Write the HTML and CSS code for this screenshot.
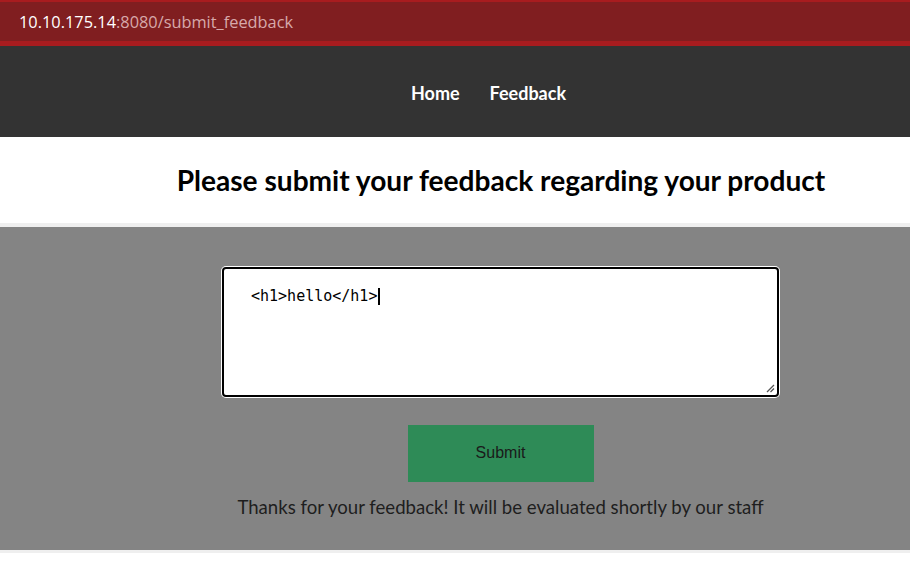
FILE: index.html
```html
<!DOCTYPE html>
<html>
<head>
<meta charset="utf-8">
<link rel="stylesheet" href="styles.css">
</head>
<body>
<div class="urlbar"><span class="host">10.10.175.14</span><span class="path">:8080/submit_feedback</span></div>
<nav class="nav">
  <a class="nav-link" href="#">Home</a>
  <a class="nav-link" href="#">Feedback</a>
</nav>
<header class="title-wrap">
  <h1 class="title">Please submit your feedback regarding your product</h1>
</header>
<main class="panel">
  <form class="form">
    <div class="textarea-box">
      <div class="textarea-text">&lt;h1&gt;hello&lt;/h1&gt;<span class="caret"></span></div>
      <svg class="grip" width="11" height="11" viewBox="0 0 11 11"><path d="M10 3 L3 10 M10 6.5 L6.5 10" stroke="#555" stroke-width="1.3" fill="none"/></svg>
    </div>
    <button class="submit" type="button">Submit</button>
    <p class="thanks">Thanks for your feedback! It will be evaluated shortly by our staff</p>
  </form>
</main>
</body>
</html>
```

FILE: styles.css
```css
html, body {
  margin: 0;
  padding: 0;
  background: #ffffff;
}
.urlbar {
  height: 39px;
  background: #801e20;
  border-top: 2px solid #a81c1f;
  border-bottom: 5px solid #a81c1f;
  box-sizing: content-box;
  padding-left: 19px;
  display: flex;
  align-items: center;
  font-family: "Open Sans", "Liberation Sans", sans-serif;
  font-size: 16.35px;
}
.host { color: #ffffff; }
.path { color: #d7a9aa; }
.nav {
  height: 91px;
  background: #333333;
  display: flex;
  justify-content: center;
  align-items: center;
  gap: 30px;
  padding-left: 67px;
  padding-top: 2px;
  box-sizing: border-box;
}
.nav-link {
  color: #ffffff;
  text-decoration: none;
  font-family: "Lato", "Open Sans", sans-serif;
  font-weight: 700;
  font-size: 18px;
}
.title-wrap {
  height: 86px;
  border-bottom: 4px solid #efefef;
  display: flex;
  align-items: center;
  justify-content: center;
  padding-left: 92px;
}
.title {
  margin: 0;
  font-family: "Lato", "Open Sans", sans-serif;
  font-weight: 700;
  font-size: 28.1px;
  color: #000000;
}
.panel {
  background: #848484;
  height: 323px;
  border-bottom: 3px solid #efefef;
}
.form {
  display: flex;
  flex-direction: column;
  align-items: center;
  padding-top: 40px;
  padding-left: 91px;
}
.textarea-box {
  position: relative;
  width: 553px;
  height: 126px;
  background: #ffffff;
  border: 2px solid #000000;
  border-radius: 4px;
  box-shadow: 0 0 0 1px #ffffff;
  box-sizing: content-box;
}
.textarea-text {
  padding: 18px 0 0 27px;
  font-family: "DejaVu Sans Mono", "Liberation Mono", monospace;
  font-size: 15px;
  color: #000000;
  display: flex;
  align-items: center;
}
.caret {
  display: inline-block;
  width: 2px;
  height: 17px;
  background: #000000;
  margin-left: 1px;
}
.grip {
  position: absolute;
  right: 2px;
  bottom: 2px;
}
.submit {
  margin-top: 28px;
  width: 186px;
  height: 57px;
  background: #2e8b57;
  border: none;
  font-family: "Liberation Sans", Arial, sans-serif;
  font-size: 16px;
  color: #1a1a1a;
  padding: 0 0 2px 0;
}
.thanks {
  margin: 14px 0 0 0;
  font-family: "Lato", "Open Sans", sans-serif;
  font-size: 18.6px;
  color: #1e1e1e;
}
```
